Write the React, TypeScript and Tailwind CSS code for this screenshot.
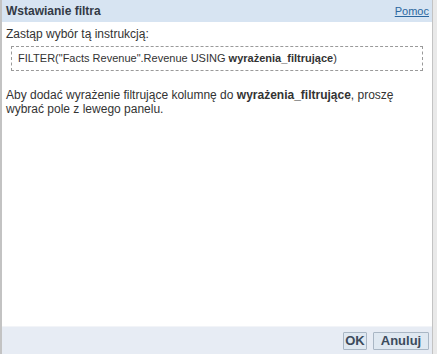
export default function App() {
  return (
    <div className="flex h-[354px] w-[437px] bg-[#e9e9e9] font-['Liberation_Sans',Arial,sans-serif] text-[#333]">
      <div className="flex h-full w-[433px] flex-col border-l-2 border-r border-[#c3c3c3] bg-white">
        <div className="flex h-[22px] items-center justify-between bg-[#d7e4f2] pl-1 pr-[3px]">
          <span className="text-[12px] font-bold text-[#333a45]">Wstawianie filtra</span>
          <a href="#" className="text-[11px] text-[#2a67a0] underline">
            Pomoc
          </a>
        </div>
        <div className="flex-1 px-1 pt-[5px]">
          <p className="text-[12px] leading-[14px]">Zastąp wybór tą instrukcją:</p>
          <div className="mx-[5px] mt-[5px] flex h-[25px] items-center border border-dashed border-[#9a9a9a] px-[6px] text-[11px]">
            <span>
              FILTER("Facts Revenue".Revenue USING <b>wyrażenia_filtrujące</b>)
            </span>
          </div>
          <p className="mt-[17px] text-[12px] leading-[14px]">
            Aby dodać wyrażenie filtrujące kolumnę do <b>wyrażenia_filtrujące</b>, proszę wybrać pole
            z lewego panelu.
          </p>
        </div>
        <div className="flex h-[28px] items-center justify-end gap-[6px] border-t border-[#f2f4f8] bg-[#e7ecf4] pr-[3px]">
          <button className="h-[18px] w-[24px] rounded-[1px] border border-[#a9b6c4] bg-[#dfe8f1] text-[13px] font-bold leading-none text-[#3c4b5c]">
            OK
          </button>
          <button className="h-[18px] w-[56px] rounded-[1px] border border-[#a9b6c4] bg-[#dfe8f1] text-[13px] font-bold leading-none text-[#3c4b5c]">
            Anuluj
          </button>
        </div>
      </div>
    </div>
  );
}
